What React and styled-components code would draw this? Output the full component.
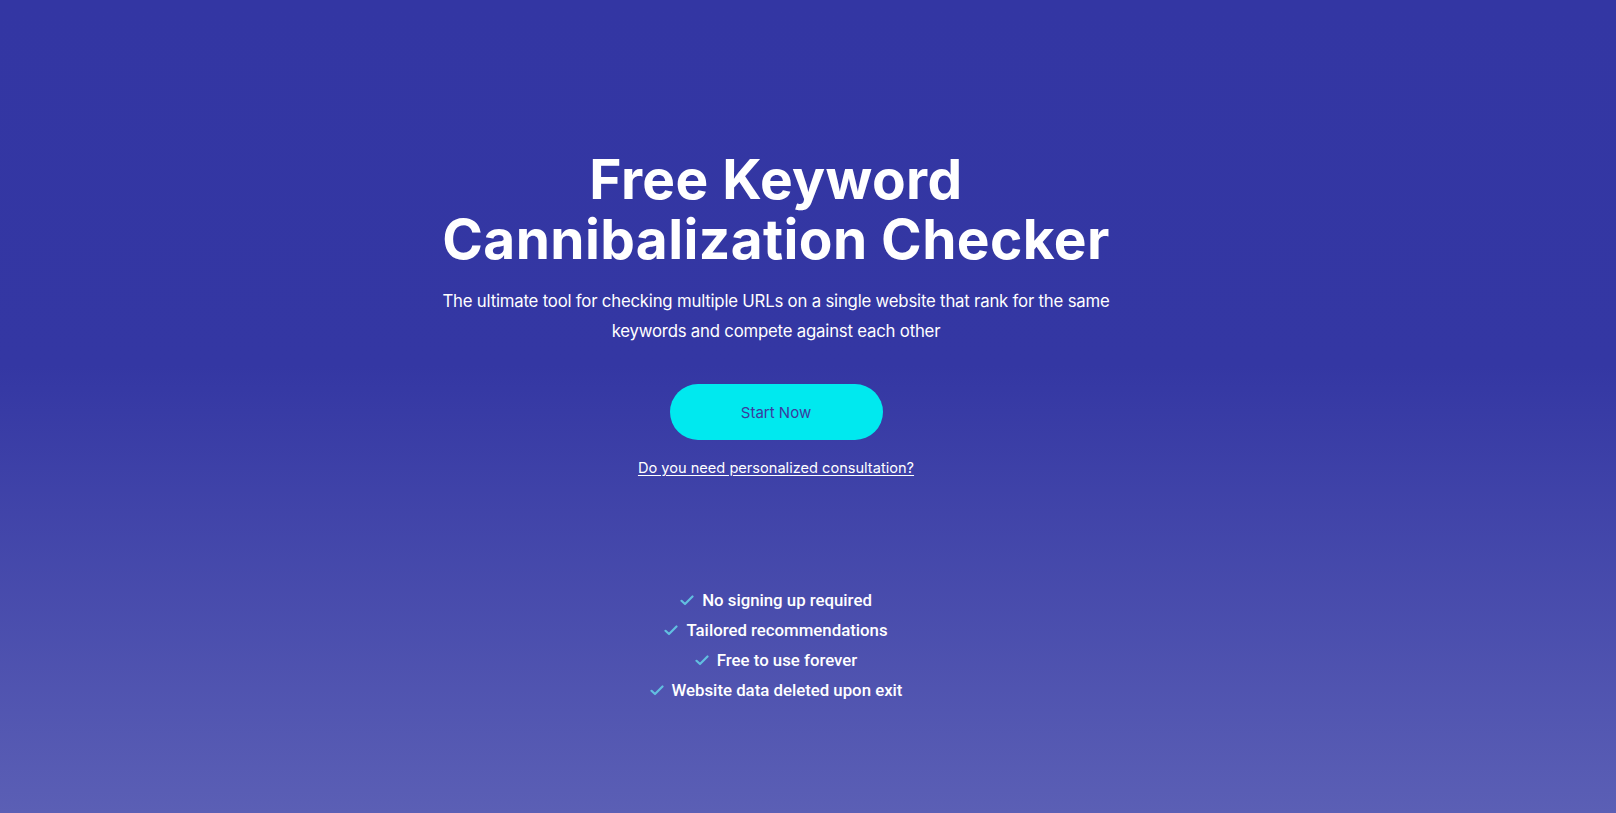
import React from "react";
import styled, { createGlobalStyle } from "styled-components";

const Global = createGlobalStyle`
  html, body { margin: 0; padding: 0; }
  body { font-family: "Inter", "Noto Sans", sans-serif; }
  * { box-sizing: border-box; }
`;

const Page = styled.main`
  min-height: 100vh;
  background: linear-gradient(180deg, #3336a3 0%, #3437a3 45%, #5b5fb5 100%);
  display: flex;
  flex-direction: column;
  align-items: center;
  padding: 149px 64px 0 0;
  color: #fff;
`;

const Title = styled.h1`
  margin: 0;
  font-family: "Inter", sans-serif;
  font-weight: 700;
  font-size: 55px;
  line-height: 60px;
  letter-spacing: 0.4px;
  text-align: center;
  max-width: 760px;
`;

const Lead = styled.p`
  margin: 17px 0 0;
  font-family: "Inter", sans-serif;
  font-size: 16.75px;
  line-height: 30px;
  letter-spacing: -0.2px;
  text-align: center;
  max-width: 690px;
`;

const Button = styled.button`
  margin-top: 38px;
  width: 213px;
  height: 56px;
  border: none;
  border-radius: 28px;
  background: #00e9ef;
  color: #3b3b9e;
  font-family: "Inter", sans-serif;
  font-size: 15px;
  cursor: pointer;
`;

const Consult = styled.a`
  margin-top: 19px;
  color: #fff;
  font-family: "Inter", sans-serif;
  font-size: 14.6px;
  text-decoration: underline;
  text-underline-offset: 2px;
`;

const Checks = styled.ul`
  list-style: none;
  margin: 108px 0 0;
  padding: 0;
  display: flex;
  flex-direction: column;
  align-items: center;
`;

const Check = styled.li`
  display: flex;
  align-items: center;
  gap: 8px;
  height: 30px;
  font-family: "Roboto", sans-serif;
  font-weight: 500;
  font-size: 16.8px;
  color: #fff;
`;

const Tick = () => (
  <svg width="14" height="11" viewBox="0 0 14 11" fill="none">
    <path d="M1.5 5.8 L5 9 L12.5 1.5" stroke="#62bfe0" strokeWidth="2.2" strokeLinecap="round" strokeLinejoin="round" />
  </svg>
);

const items = [
  "No signing up required",
  "Tailored recommendations",
  "Free to use forever",
  "Website data deleted upon exit",
];

export default function App() {
  return (
    <>
      <Global />
      <Page>
        <Title>Free Keyword<br />Cannibalization Checker</Title>
        <Lead>
          The ultimate tool for checking multiple URLs on a single website that rank for the same keywords and compete against each other
        </Lead>
        <Button>Start Now</Button>
        <Consult href="#">Do you need personalized consultation?</Consult>
        <Checks>
          {items.map((t) => (
            <Check key={t}>
              <Tick />
              {t}
            </Check>
          ))}
        </Checks>
      </Page>
    </>
  );
}
